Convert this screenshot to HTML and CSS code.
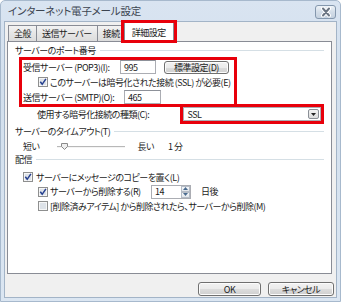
FILE: index.html
```html
<!DOCTYPE html>
<html lang="ja">
<head>
<meta charset="utf-8">
<link rel="stylesheet" href="styles.css">
</head>
<body>
<div class="window">
  <div class="titlebar">
    <span class="title">インターネット電子メール設定</span>
    <div class="close">
      <svg width="18" height="12" viewBox="0 0 18 12"><path d="M6 2.5 L12 9.5 M12 2.5 L6 9.5" stroke="#ffffff" stroke-width="4" stroke-linecap="round"/><path d="M6 2.5 L12 9.5 M12 2.5 L6 9.5" stroke="#6a7482" stroke-width="2" stroke-linecap="round"/></svg>
    </div>
  </div>
  <div class="client">
    <div class="tabs">
      <div class="tab">全般</div>
      <div class="tab">送信サーバー</div>
      <div class="tab">接続</div>
      <div class="tab active">詳細設定</div>
    </div>
    <div class="panel">
      <div class="group-title">サーバーのポート番号</div>
      <div class="ports">
        <div class="row">
          <span class="label label-pop">受信サーバー (POP3)(I):</span>
          <span class="input input-pop">995</span>
          <span class="btn btn-default">標準設定(D)</span>
        </div>
        <div class="row row-ssl">
          <span class="cb"><svg width="10" height="10" viewBox="0 0 10 10"><rect x=".5" y=".5" width="9" height="9" fill="#f6f6f6" stroke="#8e8f8f"/><rect x="2" y="2" width="6" height="6" fill="#dde2e8"/><path d="M2.3 4.8 L4.2 7.3 L7.9 1.8" stroke="#253f8f" stroke-width="1.5" fill="none"/></svg></span>
          <span>このサーバーは暗号化された接続 (SSL) が必要(E)</span>
        </div>
        <div class="row">
          <span class="label label-smtp">送信サーバー (SMTP)(O):</span>
          <span class="input input-smtp">465</span>
        </div>
      </div>
      <div class="row row-enc">
        <span class="label label-enc">使用する暗号化接続の種類(C):</span>
        <div class="enc-mark">
          <div class="select">
            <span>SSL</span>
            <span class="drop"><svg width="5" height="3" viewBox="0 0 5 3"><path d="M0 0 H5 L2.5 3 Z" fill="#222"/></svg></span>
          </div>
        </div>
      </div>
      <div class="group-title group-gap">サーバーのタイムアウト(T)</div>
      <div class="row row-slider">
        <span>短い</span>
        <svg class="slider" width="68" height="10" viewBox="0 0 68 10"><path d="M0 5.5 H68" stroke="#b8b8b8" stroke-width="1"/><path d="M0 6.5 H68" stroke="#f4f4f4" stroke-width="1"/><path d="M4.5 2.5 H10.5 V5.5 L7.5 8.5 L4.5 5.5 Z" fill="#eeeeee" stroke="#8a8a8a"/></svg>
        <span class="long">長い</span>
        <span class="minute">1 分</span>
      </div>
      <div class="group-title">配信</div>
      <div class="row row-cb1">
        <span class="cb"><svg width="10" height="10" viewBox="0 0 10 10"><rect x=".5" y=".5" width="9" height="9" fill="#f6f6f6" stroke="#8e8f8f"/><rect x="2" y="2" width="6" height="6" fill="#dde2e8"/><path d="M2.3 4.8 L4.2 7.3 L7.9 1.8" stroke="#253f8f" stroke-width="1.5" fill="none"/></svg></span>
        <span>サーバーにメッセージのコピーを置く(L)</span>
      </div>
      <div class="row row-cb2">
        <span class="cb"><svg width="10" height="10" viewBox="0 0 10 10"><rect x=".5" y=".5" width="9" height="9" fill="#f6f6f6" stroke="#8e8f8f"/><rect x="2" y="2" width="6" height="6" fill="#dde2e8"/><path d="M2.3 4.8 L4.2 7.3 L7.9 1.8" stroke="#253f8f" stroke-width="1.5" fill="none"/></svg></span>
        <span class="label label-del">サーバーから削除する(R)</span>
        <div class="spin">
          <span class="spin-val">14</span>
          <span class="spin-btns">
            <span class="spin-btn"><svg width="5" height="3" viewBox="0 0 5 3"><path d="M0 3 H5 L2.5 0 Z" fill="#4a6b8f"/></svg></span>
            <span class="spin-btn"><svg width="5" height="3" viewBox="0 0 5 3"><path d="M0 0 H5 L2.5 3 Z" fill="#4a6b8f"/></svg></span>
          </span>
        </div>
        <span class="days">日後</span>
      </div>
      <div class="row row-cb3">
        <span class="cb"><svg width="10" height="10" viewBox="0 0 10 10"><rect x=".5" y=".5" width="9" height="9" fill="#f6f6f6" stroke="#8e8f8f"/><rect x="2" y="2" width="6" height="6" fill="#dde2e8"/></svg></span>
        <span>[削除済みアイテム] から削除されたら、サーバーから削除(M)</span>
      </div>
    </div>
    <div class="buttons">
      <span class="btn btn-ok">OK</span>
      <span class="btn btn-cancel">キャンセル</span>
    </div>
  </div>
</div>
</body>
</html>
```

FILE: styles.css
```css
* { box-sizing: border-box; }
html, body { margin: 0; padding: 0; }
body {
  width: 341px;
  height: 302px;
  overflow: hidden;
  font-family: "Noto Sans CJK JP", "Noto Sans", sans-serif;
  font-size: 9px;
  letter-spacing: -0.5px;
  font-feature-settings: "palt";
  color: #1b1b1b;
  background: #ffffff;
}
.window {
  width: 341px;
  height: 302px;
  display: flex;
  flex-direction: column;
  background: linear-gradient(#d9e4f1, #d2dfed 30%, #dbe6f2);
  border: 1px solid #a7b9cd;
  border-radius: 5px 5px 0 0;
  padding: 0 3px 3px;
}
.titlebar {
  height: 20px;
  display: flex;
  align-items: center;
  justify-content: space-between;
  padding-left: 4px;
}
.title {
  font-size: 10.5px;
  letter-spacing: -0.2px;
  color: #3c4450;
  line-height: 1;
}
.close {
  width: 21px;
  height: 14px;
  margin-right: 1px;
  margin-top: 2px;
  border: 1px solid #8497ad;
  border-radius: 3px;
  background: linear-gradient(#eef3f8, #d3dde8 50%, #c5d2e0);
  display: flex;
  align-items: center;
  justify-content: center;
}
.client {
  flex: 1;
  background: #f0f0f0;
  border: 1px solid #a3b4c7;
  padding: 0 4px 0 2px;
  display: flex;
  flex-direction: column;
}
.tabs {
  height: 19px;
  display: flex;
  align-items: flex-end;
  padding-left: 1px;
  position: relative;
  z-index: 1;
}
.tab {
  height: 16px;
  padding: 0 5px;
  border: 1px solid #898c95;
  border-bottom: none;
  margin-right: -1px;
  background: linear-gradient(#f3f3f3, #e6e6e6 50%, #dcdcdc);
  display: flex;
  align-items: center;
  line-height: 1;
}
.tab.active {
  height: 20px;
  margin-bottom: -1px;
  margin-left: -1px;
  padding: 0 7px;
  background: #ffffff;
  position: relative;
}
.tab.active::after {
  content: "";
  position: absolute;
  left: -4px;
  right: -4px;
  top: -3px;
  bottom: -1px;
  border: 3px solid #e8000b;
}
.panel {
  height: 233px;
  background: #ffffff;
  border: 1px solid #898c95;
  padding: 2px 7px 0 7px;
  display: flex;
  flex-direction: column;
}
.group-title {
  height: 13px;
  display: flex;
  align-items: center;
  gap: 4px;
  line-height: 1;
}
.group-title::after {
  content: "";
  flex: 1;
  height: 1px;
  background: #d5dfe5;
}
.group-gap { margin-top: 1px; }
.row {
  display: flex;
  align-items: center;
  line-height: 1;
  white-space: nowrap;
}
.ports {
  margin-left: 4px;
  width: 218px;
  height: 50px;
  border: 3px solid #e8000b;
  display: flex;
  flex-direction: column;
}
.ports .row { height: 14px; }
.ports .row-ssl { height: 16px; padding-left: 16px; gap: 2px; }
.label-pop { width: 98px; padding-left: 1px; }
.label-smtp { width: 102px; padding-left: 1px; }
.input {
  height: 14px;
  background: #ffffff;
  border: 1px solid #abadb3;
  border-top-color: #8d9199;
  padding-left: 3px;
  display: flex;
  align-items: center;
}
.input-pop { width: 36px; }
.input-smtp { width: 37px; }
.btn {
  display: flex;
  align-items: center;
  justify-content: center;
  border: 1px solid #707070;
  border-radius: 3px;
  background: linear-gradient(#f2f2f2, #ebebeb 50%, #dddddd 51%, #cfcfcf);
  box-shadow: inset 0 0 0 1px #fcfcfc;
  line-height: 1;
}
.btn-default {
  width: 65px;
  height: 13px;
  margin-left: 8px;
}
.cb { display: flex; width: 10px; height: 10px; }
.row-enc {
  margin-top: -3px;
  height: 20px;
  padding-left: 22px;
}
.label-enc { width: 144px; }
.enc-mark {
  width: 144px;
  height: 20px;
  border: 3px solid #e8000b;
}
.select {
  height: 14px;
  background: #ffffff;
  border: 1px solid #abadb3;
  display: flex;
  align-items: center;
  justify-content: space-between;
  padding-left: 3px;
  padding-right: 1px;
}
.drop {
  width: 11px;
  height: 10px;
  border: 1px solid #8a8f96;
  border-radius: 2px;
  background: linear-gradient(#f4f4f4, #dcdcdc);
  display: flex;
  align-items: center;
  justify-content: center;
}
.row-slider {
  margin-top: 1px;
  height: 14px;
  padding-left: 8px;
}
.slider { margin-left: 17px; }
.long { margin-left: 13px; }
.minute { margin-left: 14px; }
.row-cb1 {
  margin-top: 4px;
  height: 14px;
  padding-left: 8px;
  gap: 3px;
}
.row-cb2 {
  height: 15px;
  padding-left: 23px;
  gap: 2px;
}
.label-del { width: 99px; }
.spin {
  width: 40px;
  height: 14px;
  background: #ffffff;
  border: 1px solid #abadb3;
  display: flex;
  align-items: center;
  justify-content: space-between;
  padding-left: 3px;
}
.spin-btns {
  display: flex;
  flex-direction: column;
  width: 9px;
  height: 12px;
}
.spin-btn {
  flex: 1;
  border: 1px solid #b5bcc6;
  background: linear-gradient(#f6f8fa, #e2e6eb);
  display: flex;
  align-items: center;
  justify-content: center;
}
.days { margin-left: 8px; }
.row-cb3 {
  height: 14px;
  padding-left: 23px;
  gap: 2px;
}
.buttons {
  margin-top: 8px;
  margin-right: -2px;
  display: flex;
  justify-content: flex-end;
  gap: 7px;
}
.btn-ok { width: 63px; height: 14px; }
.btn-cancel { width: 66px; height: 14px; }
```
